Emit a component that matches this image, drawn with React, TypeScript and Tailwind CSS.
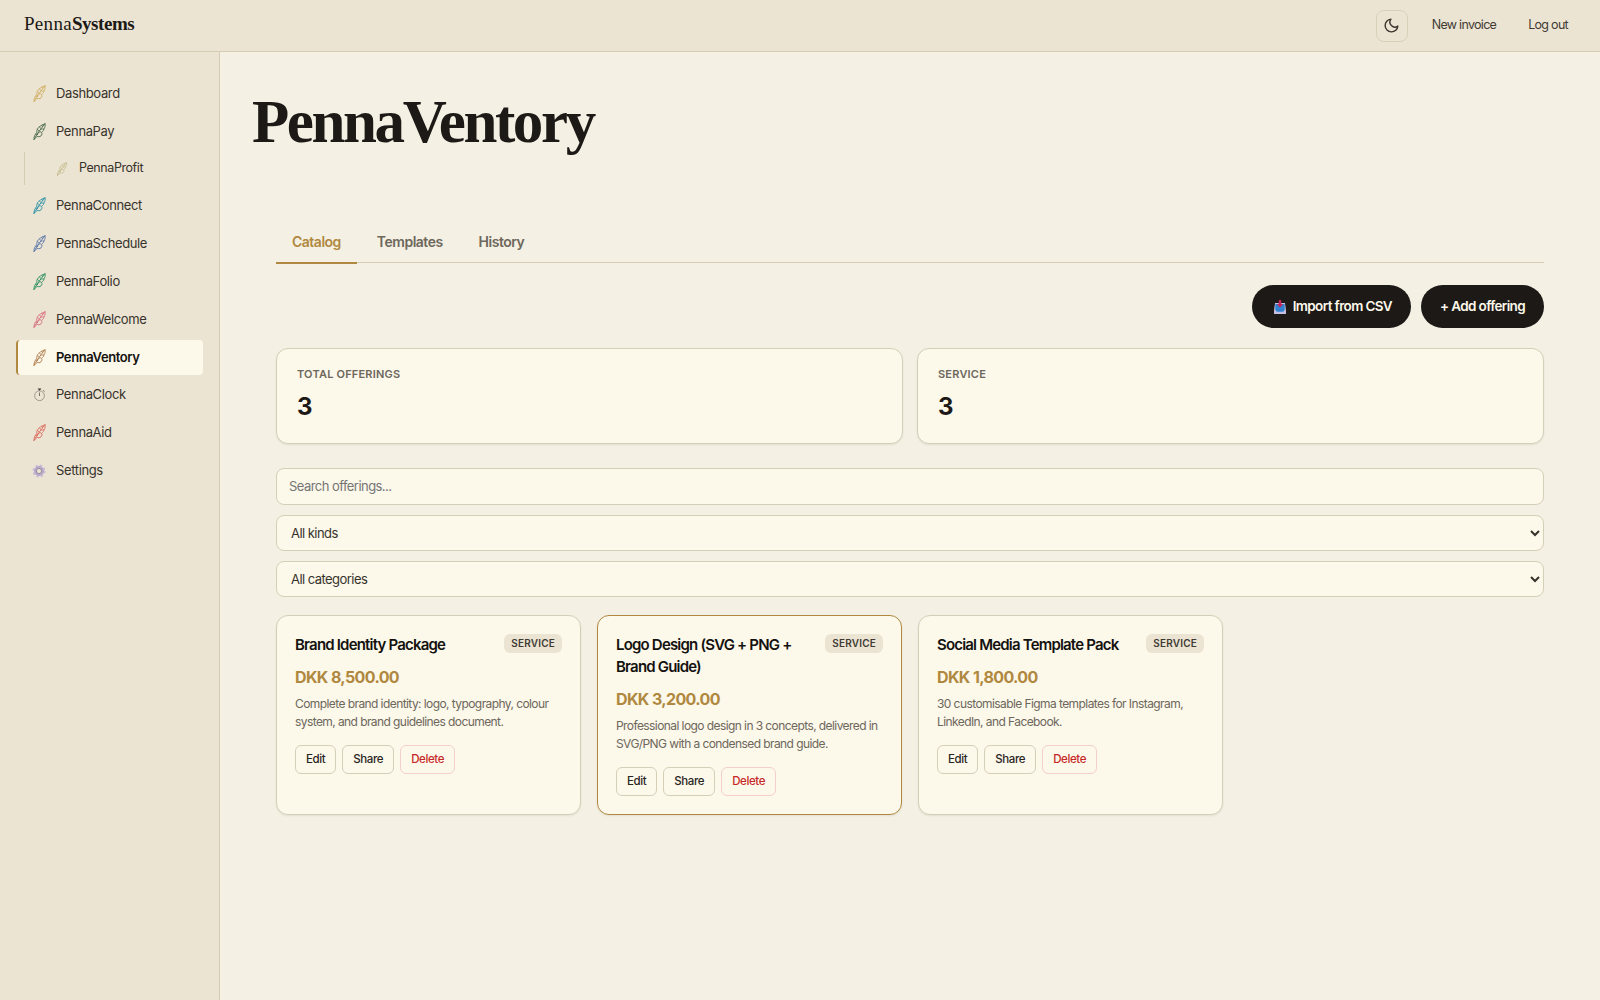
import React, { useState } from "react";

type NavItem = {
  label: string;
  color: string;
  icon?: "feather" | "clock" | "gear";
  nested?: boolean;
};

const navItems: NavItem[] = [
  { label: "Dashboard", color: "#cfae62" },
  { label: "PennaPay", color: "#4d6b4f" },
  { label: "PennaProfit", color: "#c4bc8c", nested: true },
  { label: "PennaConnect", color: "#2f93a6" },
  { label: "PennaSchedule", color: "#5a78a8" },
  { label: "PennaFolio", color: "#2f8f62" },
  { label: "PennaWelcome", color: "#d8707c" },
  { label: "PennaVentory", color: "#b08050" },
  { label: "PennaClock", color: "#77736a", icon: "clock" },
  { label: "PennaAid", color: "#dc6a5c" },
  { label: "Settings", color: "#a79bbd", icon: "gear" },
];

const tabs = ["Catalog", "Templates", "History"];

const stats = [
  { label: "Total offerings", value: 3 },
  { label: "Service", value: 3 },
];

const offerings = [
  {
    title: "Brand Identity Package",
    price: "DKK 8,500.00",
    description: "Complete brand identity: logo, typography, colour system, and brand guidelines document.",
  },
  {
    title: "Logo Design (SVG + PNG + Brand Guide)",
    price: "DKK 3,200.00",
    description: "Professional logo design in 3 concepts, delivered in SVG/PNG with a condensed brand guide.",
    highlighted: true,
  },
  {
    title: "Social Media Template Pack",
    price: "DKK 1,800.00",
    description: "30 customisable Figma templates for Instagram, LinkedIn, and Facebook.",
  },
];

const Feather = ({ color, size }: { color: string; size: number }) => (
  <svg width={size} height={size} viewBox="0 0 16 16" fill="none" stroke={color} strokeLinecap="round" strokeLinejoin="round">
    <path d="M13.200.7C10.400 1.700 7.200 3.400 6 5.800 5.400 7 5.300 8.100 5.500 9.200 3.700 10.500 2.600 12.800 2.800 15.500" strokeWidth=".85" />
    <path d="M13.200.7c.4 1.800 0 3.500-1.100 4.900.1 1.200-.6 2-1.600 2.600" strokeWidth=".85" />
    <path d="M12.600 1.500C9.600 4.900 5.800 10 2.800 15.500" strokeWidth=".9" />
    <path d="M6 11c.3-1.900 1.900-3.100 3.300-2.600 1.400.6 1.300 2.600.1 3.700-1.200 1.100-3 1.100-4 .1" strokeWidth=".9" />
    <path d="M6 5.800l1.500 1.700M8 3.600l1.200 1.500M10.400 2l.4 1.600M12.100 5.600l-2.800.2M4.600 9.800l.4 1.600M5.900 12.700c-.6 1-1.500 1.600-2.500 1.900" strokeWidth=".7" />
  </svg>
);

const Stopwatch = () => (
  <svg width="13" height="14" viewBox="0 0 13 14" fill="none" stroke="#969186">
    <circle cx="6.500" cy="7.700" r="4.900" strokeWidth=".9" />
    <path d="M6.500 4.500v3.500" stroke="#77736a" strokeWidth="1" />
    <path d="M4.900 1h3.200" stroke="#4a463e" strokeWidth="1.200" />
    <path d="M6.500 1v1.700M10.300 2.500l1.100 1" stroke="#4a463e" strokeWidth="1" />
  </svg>
);

const Gear = () => (
  <svg width="14" height="14" viewBox="0 0 14 14" fill="none">
    <circle cx="7" cy="7" r="5.700" stroke="#c6bbd8" strokeWidth="1.600" strokeDasharray="2.500 1.977" />
    <circle cx="7" cy="7" r="3.900" stroke="#b5a8ca" strokeWidth="2.200" />
    <circle cx="7" cy="7" r="2.600" stroke="#8d8199" strokeWidth=".9" />
  </svg>
);

const Inbox = () => (
  <svg width="12" height="14" viewBox="0 0 12 14">
    <path d="M1 3h10l1 7.500V14H0v-3.500z" fill="#c4bfe0" />
    <path d="M1.300 4h9.400v6l-1.700 1.800H3L1.300 10z" fill="#2f80d0" />
    <path d="M4.700 0h2.600v4h1.900L6 7.400 2.800 4h1.900z" fill="#c3265b" />
  </svg>
);

const NavIcon = ({ item }: { item: NavItem }) => {
  if (item.icon === "clock") return <Stopwatch />;
  if (item.icon === "gear") return <Gear />;
  return <Feather color={item.color} size={item.nested ? 14 : 17} />;
};

const TopBar = () => (
  <header className="flex h-[52px] items-center justify-between border-b border-[#d6ccb4] bg-[#ece4d3] pl-6 pr-8">
    <div className="-mt-0.5 font-['Liberation_Serif',serif] text-[19px] tracking-[0.3px] text-[#1c1916]">
      Penna<span className="font-bold tracking-[-0.45px]">Systems</span>
    </div>
    <nav className="flex items-center text-[12.500px] tracking-[-0.7px] text-[#3f3b33]">
      <button className="mr-6 flex size-8 items-center justify-center rounded-lg border border-[#d9cfb9]">
        <svg width="17" height="17" viewBox="0 0 24 24" fill="none" stroke="#3a362e" strokeWidth="2" strokeLinecap="round" strokeLinejoin="round">
          <path d="M21 12.790A9 9 0 1 1 11.210 3 7 7 0 0 0 21 12.790z" />
        </svg>
      </button>
      <a className="mr-8">New invoice</a>
      <a>Log out</a>
    </nav>
  </header>
);

const Sidebar = () => (
  <aside className="flex w-[220px] shrink-0 flex-col gap-[3px] border-r border-[#d6ccb4] bg-[#ece4d3] px-4 pt-6 text-[13px] tracking-[-0.37px] text-[#37332b]">
    {navItems.map((item) => {
      if (item.nested) {
        return (
          <div
            key={item.label}
            className="ml-2 flex h-[33px] items-center gap-2.5 border-l border-[#d6ccb4] pl-[30px] text-[12.500px] tracking-[-0.42px]"
          >
            <span className="flex w-[14px] justify-center">
              <NavIcon item={item} />
            </span>
            {item.label}
          </div>
        );
      }
      const active = item.label === "PennaVentory";
      return (
        <div
          key={item.label}
          className={`flex items-center gap-2 rounded border-l-2 pl-3 ${item.icon === "clock" ? "mb-px h-[33px]" : "h-[35px]"} ${
            active ? "border-[#b08840] bg-[#fcf8ea] font-semibold tracking-[-0.42px] text-[#14120f]" : "border-transparent"
          }`}
        >
          <span className="flex w-[18px] justify-center">
            <NavIcon item={item} />
          </span>
          {item.label}
        </div>
      );
    })}
  </aside>
);

const OfferingCard = ({ offering }: { offering: (typeof offerings)[number] }) => (
  <article
    className={`rounded-xl border bg-[#fcf8ea] p-[18px] shadow-[0_1px_2px_rgba(28,25,22,0.08)] ${
      offering.highlighted ? "border-[#b08840]" : "border-[#d6cfb8]"
    }`}
  >
    <div className="flex items-start justify-between gap-2">
      <h3 className="text-[15px] font-semibold leading-[21.750px] tracking-[-0.81px] text-[#14120f]">{offering.title}</h3>
      <span className="shrink-0 rounded-md bg-[#ece4d3] px-[7px] py-0.5 text-[10px] font-semibold leading-[15px] tracking-[0.2px] text-[#3f3b33]">
        SERVICE
      </span>
    </div>
    <div className="mt-2.5 text-[16px] font-bold leading-[23.200px] tracking-[-0.62px] text-[#b08840]">{offering.price}</div>
    <p className="mt-1.5 text-[12px] leading-[18.125px] tracking-[-0.58px] text-[#6d675c]">{offering.description}</p>
    <div className="mt-3.5 flex gap-1.5 text-[11.500px] font-medium leading-[16.700px] tracking-[-0.4px] text-[#2a261f]">
      <button className="rounded-md border border-[#d6cfb8] px-2.5 py-[5px]">Edit</button>
      <button className="rounded-md border border-[#d6cfb8] px-2.5 py-[5px]">Share</button>
      <button className="rounded-md border border-[#f6cfca] px-2.5 py-[5px] text-[#c62828]">Delete</button>
    </div>
  </article>
);

const App = () => {
  const [activeTab, setActiveTab] = useState("Catalog");

  return (
    <div className="flex h-screen flex-col overflow-hidden bg-[#f4f0e3] font-[Inter,sans-serif] text-[#1c1916]">
      <TopBar />
      <div className="flex min-h-0 flex-1">
        <Sidebar />
        <main className="flex-1 pl-8 pr-14">
          <h1 className="mt-[38px] font-['Liberation_Serif',serif] text-[61px] font-bold leading-[64px] tracking-[-2.400px]">
            PennaVentory
          </h1>

          <div className="ml-6 mt-[68px]">
            <div className="flex h-[41px] gap-1 border-b border-[#d6ccb4] text-sm font-semibold tracking-[-0.5px] text-[#6d675c]">
              {tabs.map((tab) => (
                <button
                  key={tab}
                  onClick={() => setActiveTab(tab)}
                  className={`h-[42px] border-b-2 px-4 ${
                    tab === activeTab ? "border-[#b08840] text-[#b08840]" : "border-transparent"
                  }`}
                >
                  {tab}
                </button>
              ))}
            </div>

            <div className="mt-[22px] flex justify-end gap-2.5 text-[13.500px] font-semibold tracking-[-0.64px] text-[#fcf8ea]">
              <button className="flex h-[43px] items-center gap-[7px] rounded-full bg-[#1c1916] pl-[22px] pr-[19px]">
                <Inbox />
                Import from CSV
              </button>
              <button className="h-[43px] rounded-full bg-[#1c1916] px-[19px]">+ Add offering</button>
            </div>

            <div className="mt-5 grid grid-cols-2 gap-3.5">
              {stats.map((stat) => (
                <div
                  key={stat.label}
                  className="h-24 rounded-xl border border-[#d6cfb8] bg-[#fcf8ea] px-5 pt-[17px] shadow-[0_1px_2px_rgba(28,25,22,0.08)]"
                >
                  <div className="text-[11px] font-semibold uppercase leading-4 tracking-[0.2px] text-[#6d675c]">{stat.label}</div>
                  <div className="mt-[7px] text-2xl font-bold leading-[35px]">{stat.value}</div>
                </div>
              ))}
            </div>

            <div className="mt-6 flex flex-col gap-2.5 text-[13px] tracking-[-0.55px] text-[#37332b]">
              <input
                className="h-[37px] rounded-lg border border-[#d6cfb8] bg-[#fcf8ea] px-3 pb-px placeholder:text-[#757575]"
                placeholder="Search offerings..."
              />
              <select className="h-9 rounded-lg border border-[#d6cfb8] bg-[#fcf8ea] pl-2.5">
                <option>All kinds</option>
              </select>
              <select className="h-9 rounded-lg border border-[#d6cfb8] bg-[#fcf8ea] pl-2.5">
                <option>All categories</option>
              </select>
            </div>

            <div className="mt-[18px] grid grid-cols-4 gap-4">
              {offerings.map((offering) => (
                <OfferingCard key={offering.title} offering={offering} />
              ))}
            </div>
          </div>
        </main>
      </div>
    </div>
  );
};

export default App;
